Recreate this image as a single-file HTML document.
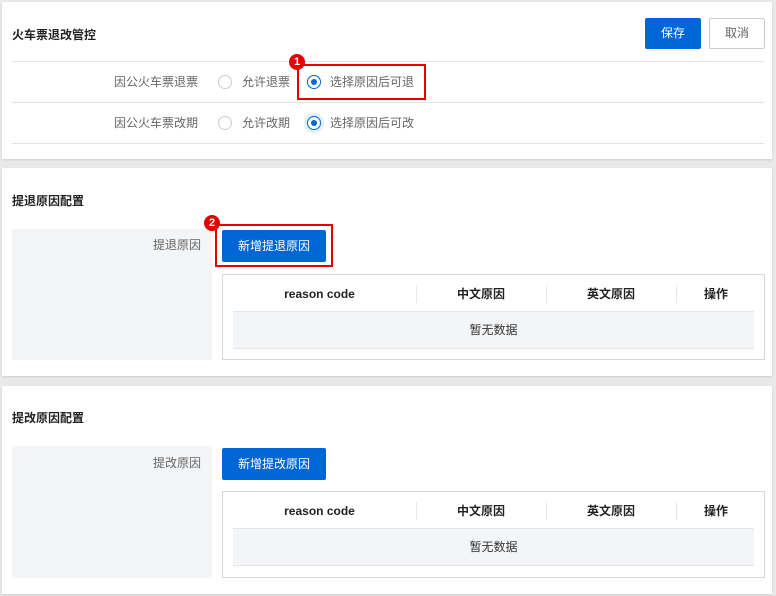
<!DOCTYPE html>
<html><head><meta charset="utf-8"><style>
*{box-sizing:border-box;margin:0;padding:0}
body{width:776px;height:596px;background:#e9e9e9;font-family:"Liberation Sans","Noto Sans CJK SC",sans-serif;font-size:12px;line-height:16px;color:#333;position:relative;overflow:hidden}
.p{position:absolute;left:2px;width:770px;background:#fff;box-shadow:0 1px 2px rgba(0,0,0,.12)}
.a{position:absolute}
.t{font-size:12px;font-weight:bold;color:#222}
.btn{position:absolute;background:#0066d6;color:#fff;border-radius:2px;text-align:center;font-size:12px}
.line{position:absolute;left:10px;width:752px;height:1px;background:#e4e4e4}
.lbl{color:#666}
.r{position:absolute;width:14px;height:14px;border-radius:50%;border:1px solid #ccc;background:#fff}
.r.on{border-color:#0066d6}
.r.on:after{content:"";position:absolute;left:3px;top:3px;width:6px;height:6px;border-radius:50%;background:#0066d6}
.red{position:absolute;border:2px solid #e60000}
.badge{position:absolute;width:16px;height:16px;border-radius:50%;background:#e60000;color:#fff;font-size:11px;font-weight:bold;text-align:center;line-height:16px}
.tbl{position:absolute;left:220px;width:543px;border:1px solid #d6d6d6}
.th{position:absolute;top:11px;height:16px;line-height:16px;font-weight:bold;color:#222;text-align:center}
.sep{position:absolute;top:10px;width:1px;height:18px;background:#e8e8e8}
.row{position:absolute;left:10px;width:521px;top:36px;height:38px;background:#f4f5f7;border-top:1px solid #e4e6ea;border-bottom:1px solid #e4e6ea;text-align:center;line-height:36px;color:#333}
</style></head><body>
<div class="p" style="top:2px;height:157px">
  <div class="a t" style="left:10px;top:25px">火车票退改管控</div>
  <div class="btn" style="left:643px;top:16px;width:56px;height:31px;line-height:31px">保存</div>
  <div class="a" style="left:707px;top:16px;width:56px;height:31px;line-height:29px;border:1px solid #ccc;border-radius:2px;text-align:center;color:#666">取消</div>
  <div class="line" style="top:59px"></div>
  <div class="line" style="top:100px"></div>
  <div class="line" style="top:141px"></div>
  <div class="a lbl" style="left:112px;top:72px">因公火车票退票</div>
  <div class="r" style="left:216px;top:73px"></div>
  <div class="a lbl" style="left:240px;top:72px">允许退票</div>
  <div class="r on" style="left:305px;top:73px"></div>
  <div class="a lbl" style="left:328px;top:72px">选择原因后可退</div>
  <div class="red" style="left:295px;top:62px;width:129px;height:36px"></div>
  <div class="badge" style="left:287px;top:52px">1</div>
  <div class="a lbl" style="left:112px;top:113px">因公火车票改期</div>
  <div class="r" style="left:216px;top:114px"></div>
  <div class="a lbl" style="left:240px;top:113px">允许改期</div>
  <div class="r on" style="left:305px;top:114px;box-shadow:0 0 0 3px #e3f0fc"></div>
  <div class="a lbl" style="left:328px;top:113px">选择原因后可改</div>
</div>

<div class="p" style="top:168px;height:208px">
  <div class="a t" style="left:10px;top:25px">提退原因配置</div>
  <div class="a" style="left:10px;top:61px;width:200px;height:131px;background:#f4f5f7"></div>
  <div class="a lbl" style="left:151px;top:69px">提退原因</div>
  <div class="btn" style="left:220px;top:62px;width:104px;height:32px;line-height:32px">新增提退原因</div>
  <div class="red" style="left:213px;top:56px;width:118px;height:43px"></div>
  <div class="badge" style="left:202px;top:47px">2</div>
  <div class="tbl" style="top:106px;height:86px">
    <div class="th" style="left:0;width:193px">reason code</div>
    <div class="sep" style="left:193px"></div>
    <div class="th" style="left:193px;width:130px">中文原因</div>
    <div class="sep" style="left:323px"></div>
    <div class="th" style="left:323px;width:130px">英文原因</div>
    <div class="sep" style="left:453px"></div>
    <div class="th" style="left:453px;width:80px">操作</div>
    <div class="row">暂无数据</div>
  </div>
</div>

<div class="p" style="top:386px;height:208px">
  <div class="a t" style="left:10px;top:24px">提改原因配置</div>
  <div class="a" style="left:10px;top:60px;width:200px;height:132px;background:#f4f5f7"></div>
  <div class="a lbl" style="left:151px;top:69px">提改原因</div>
  <div class="btn" style="left:220px;top:62px;width:104px;height:32px;line-height:32px">新增提改原因</div>
  <div class="tbl" style="top:105px;height:87px">
    <div class="th" style="left:0;width:193px">reason code</div>
    <div class="sep" style="left:193px"></div>
    <div class="th" style="left:193px;width:130px">中文原因</div>
    <div class="sep" style="left:323px"></div>
    <div class="th" style="left:323px;width:130px">英文原因</div>
    <div class="sep" style="left:453px"></div>
    <div class="th" style="left:453px;width:80px">操作</div>
    <div class="row">暂无数据</div>
  </div>
</div>
</body></html>
